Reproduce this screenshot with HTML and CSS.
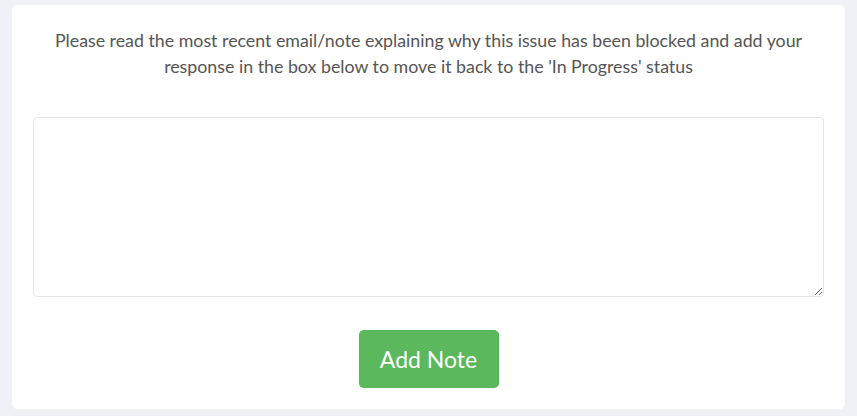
FILE: index.html
```html
<!DOCTYPE html>
<html>
<head>
<meta charset="utf-8">
<link rel="stylesheet" href="styles.css">
</head>
<body>
<div class="card">
  <p class="intro">Please read the most recent email/note explaining why this issue has been blocked and add your response in the box below to move it back to the 'In Progress' status</p>
  <textarea class="note"></textarea>
  <div class="actions">
    <button class="btn-success">Add Note</button>
  </div>
</div>
</body>
</html>
```
FILE: styles.css
```css
html, body {
  margin: 0;
  padding: 0;
  background: #f0f1f6;
  font-family: Lato, "Open Sans", sans-serif;
}
body {
  padding: 5px 12px 0 12px;
}
.card {
  width: 833px;
  height: 404px;
  box-sizing: border-box;
  background: #ffffff;
  border-radius: 5px;
  padding: 22px 21px 21px 21px;
  display: flex;
  flex-direction: column;
}
.intro {
  margin: 0;
  text-align: center;
  font-size: 17.8px;
  line-height: 26px;
  color: #555555;
  padding: 0 8px;
}
.note {
  display: block;
  margin-top: 38px;
  width: 100%;
  height: 180px;
  box-sizing: border-box;
  border: 1px solid #e4e5ea;
  border-radius: 4px;
  resize: vertical;
  font-family: inherit;
}
.actions {
  display: flex;
  justify-content: center;
  margin-top: 33px;
}
.btn-success {
  width: 140px;
  height: 58px;
  background: #5cb85c;
  border: 1px solid #4cae4c;
  border-color: #5cb85c #4cae4c #5cb85c #5cb85c;
  border-radius: 5px;
  color: #ffffff;
  font-family: Lato, sans-serif;
  font-size: 23px;
  padding: 0;
}
```
